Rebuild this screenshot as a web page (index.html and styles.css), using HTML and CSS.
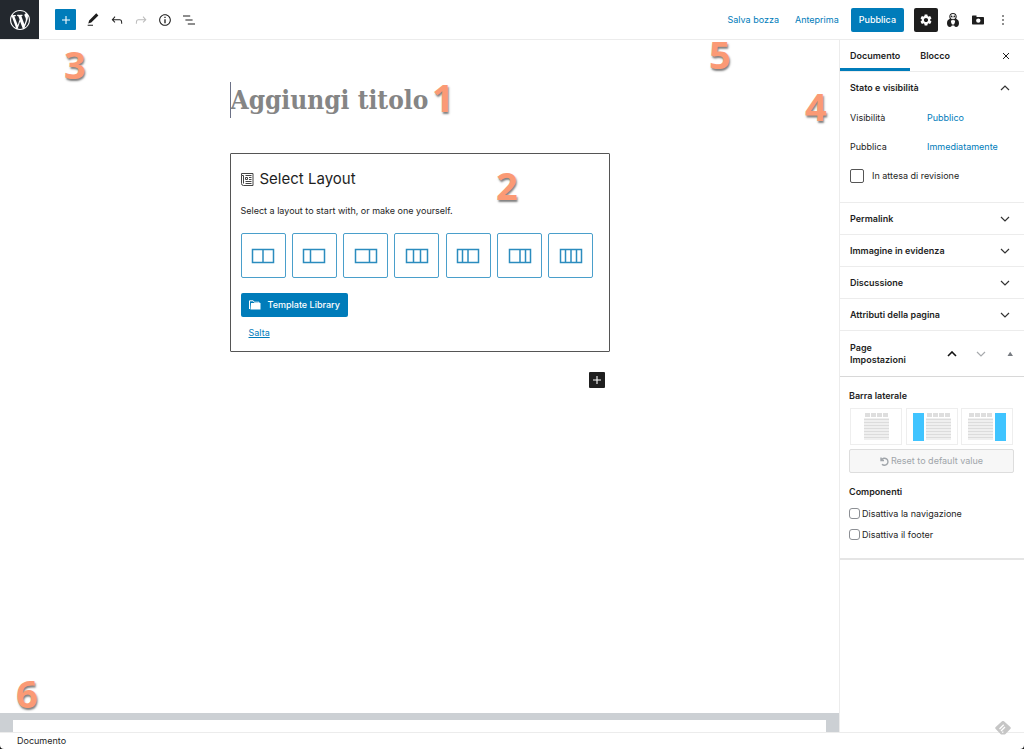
FILE: index.html
```html
<!DOCTYPE html>
<html lang="it">
<head>
    <meta charset="UTF-8">
    <meta name="viewport" content="width=device-width, initial-scale=1.0">
    <title>Aggiungi pagina</title>
    <link rel="stylesheet" href="styles.css">
</head>
<body>
    <div class="editor">
        <header class="editor-header">
            <a class="wp-logo" href="#" aria-label="WordPress">
                <svg width="20" height="20" viewBox="0 0 20 20" fill="currentColor"><path d="M20 10c0-5.51-4.49-10-10-10C4.48 0 0 4.49 0 10c0 5.52 4.48 10 10 10 5.51 0 10-4.48 10-10zM7.78 15.37L4.37 6.22c.55-.02 1.17-.08 1.17-.08.5-.06.44-1.13-.06-1.11 0 0-1.45.11-2.37.11-.18 0-.37 0-.58-.01C4.12 2.69 6.87 1.11 10 1.11c2.33 0 4.45.87 6.05 2.34-.68-.11-1.65.39-1.65 1.58 0 .74.45 1.36.9 2.1.35.61.55 1.36.55 2.46 0 1.49-1.4 5-1.4 5l-3.03-8.37c.54-.02.82-.17.82-.17.5-.05.44-1.25-.06-1.22 0 0-1.44.12-2.38.12-.87 0-2.33-.12-2.33-.12-.5-.03-.56 1.2-.06 1.22l.92.08 1.26 3.41zM17.41 10c.24-.64.74-1.87.43-4.25.7 1.29 1.05 2.71 1.05 4.25 0 3.29-1.73 6.24-4.4 7.78.97-2.59 1.94-5.2 2.92-7.78zM6.1 18.09C3.12 16.65 1.11 13.53 1.11 10c0-1.3.23-2.48.72-3.59C3.25 10.3 4.67 14.2 6.1 18.09zm4.03-6.63l2.58 6.98c-.86.29-1.76.45-2.71.45-.79 0-1.57-.11-2.29-.33.81-2.38 1.62-4.74 2.42-7.1z"/></svg>
            </a>
            <div class="toolbar">
                <button class="inserter-btn" aria-label="Aggiungi blocco">
                    <svg width="16" height="16" viewBox="0 0 24 24" fill="currentColor"><path d="M18 11.2h-5.2V6h-1.6v5.2H6v1.6h5.2V18h1.6v-5.2H18z"/></svg>
                </button>
                <button class="tool-btn" aria-label="Strumenti">
                    <svg width="16" height="16" viewBox="0 0 24 24" fill="currentColor"><path d="M20.1 5.1L16.9 2 6.2 12.7l-1.3 4.4 4.5-1.3L20.1 5.1zM4 20.8h8v-1.5H4v1.5z"/></svg>
                </button>
                <button class="tool-btn" aria-label="Annulla">
                    <svg width="16" height="16" viewBox="0 0 24 24" fill="currentColor"><path d="M18.3 11.7c-.6-.6-1.4-.9-2.3-.9H6.7l2.9-3.3-1.1-1-4.5 5L8.5 16l1-1-2.7-2.7H16c.5 0 .9.2 1.3.5 1 1 1 3.4 1 4.5v.3h1.5v-.2c0-1.5 0-4.3-1.5-5.7z"/></svg>
                </button>
                <button class="tool-btn" aria-label="Ripeti" disabled>
                    <svg width="16" height="16" viewBox="0 0 24 24" fill="currentColor"><path d="M15.6 6.5l-1.1 1 2.9 3.3H8c-.9 0-1.7.3-2.3.9-1.4 1.5-1.4 4.2-1.4 5.6v.2h1.5v-.3c0-1.1 0-3.5 1-4.5.3-.3.7-.5 1.3-.5h9.2L14.5 15l1.1 1.1 4.6-4.6-4.6-5z"/></svg>
                </button>
                <button class="tool-btn" aria-label="Informazioni">
                    <svg width="16" height="16" viewBox="0 0 24 24" fill="currentColor"><path d="M12 3.2c-4.8 0-8.8 3.9-8.8 8.8 0 4.8 3.9 8.8 8.8 8.8 4.8 0 8.8-3.9 8.8-8.8 0-4.8-4-8.8-8.8-8.8zm0 16c-4 0-7.2-3.3-7.2-7.2C4.8 8 8 4.8 12 4.8s7.2 3.3 7.2 7.2c0 4-3.2 7.2-7.2 7.2zM11 17h2v-6h-2v6zm0-8h2V7h-2v2z"/></svg>
                </button>
                <button class="tool-btn" aria-label="Struttura">
                    <svg width="16" height="16" viewBox="0 0 24 24" fill="currentColor"><path d="M13.8 5.2H3v1.5h10.8V5.2zm-3.6 12v1.5H21v-1.5H10.2zm7.2-6H6.6v1.5h10.8v-1.5z"/></svg>
                </button>
            </div>
            <div class="header-actions">
                <button class="link-btn">Salva bozza</button>
                <button class="link-btn">Anteprima</button>
                <button class="primary-btn publish-btn">Pubblica</button>
                <button class="settings-btn" aria-label="Impostazioni">
                    <svg width="14" height="14" viewBox="0 0 24 24" fill="currentColor"><path d="M19.14 12.94c.04-.3.06-.61.06-.94 0-.32-.02-.64-.07-.94l2.03-1.58c.18-.14.23-.41.12-.61l-1.92-3.32c-.12-.22-.37-.29-.59-.22l-2.39.96c-.5-.38-1.03-.7-1.62-.94l-.36-2.54c-.04-.24-.24-.41-.48-.41h-3.84c-.24 0-.43.17-.47.41l-.36 2.54c-.59.24-1.13.57-1.62.94l-2.39-.96c-.22-.08-.47 0-.59.22L2.74 8.87c-.12.21-.08.47.12.61l2.03 1.58c-.05.3-.09.63-.09.94s.02.64.07.94l-2.03 1.58c-.18.14-.23.41-.12.61l1.92 3.32c.12.22.37.29.59.22l2.39-.96c.5.38 1.03.7 1.62.94l.36 2.54c.05.24.24.41.48.41h3.84c.24 0 .44-.17.47-.41l.36-2.54c.59-.24 1.13-.56 1.62-.94l2.39.96c.22.08.47 0 .59-.22l1.92-3.32c.12-.22.07-.47-.12-.61l-2.01-1.58zM12 15.6c-1.98 0-3.6-1.62-3.6-3.6s1.62-3.6 3.6-3.6 3.6 1.62 3.6 3.6-1.62 3.6-3.6 3.6z"/></svg>
                </button>
                <button class="plugin-btn" aria-label="Panda">
                    <svg width="14" height="14" viewBox="0 0 14 14">
                        <path d="M7 0C4.600 0 3.300 1.600 3.300 3.600c0 1 .2 1.600.6 2.200C2.200 6.400 1 8 1 10.200 1 12.500 2.200 14 4 14c1 0 1.600-.6 1.800-1.400h2.400C8.400 13.400 9 14 10 14c1.800 0 3-1.500 3-3.800 0-2.200-1.200-3.800-2.900-4.400.4-.6.6-1.200.6-2.200C10.700 1.600 9.400 0 7 0z" fill="#1e1e1e"/>
                        <path d="M7 1C5.300 1 4.300 2 4.300 3.500S5.400 6.200 7 6.200s2.700-1.200 2.700-2.700S8.700 1 7 1zM4.800 7.800c.6-.5 1.300-.7 2.200-.7s1.600.2 2.200.7c-.2 1.500-.5 2.700-1.200 3.600H6c-.7-.9-1-2.100-1.200-3.600z" fill="#fff"/>
                        <circle cx="5.600" cy="3.400" r=".9" fill="#1e1e1e"/>
                        <circle cx="8.400" cy="3.400" r=".9" fill="#1e1e1e"/>
                        <path d="M6.300 4.800h1.400L7 5.500z" fill="#1e1e1e"/>
                    </svg>
                </button>
                <button class="plugin-btn" aria-label="Modelli">
                    <svg width="12" height="10" viewBox="0 0 12 10" fill="#1e1e1e" fill-rule="evenodd"><path d="M1 .5h3.500V2H11c.6 0 1 .4 1 1v5.500c0 .6-.4 1-1 1H1c-.6 0-1-.4-1-1v-7c0-.6.4-1 1-1zM6.300 3.400a2.200 2.200 0 1 0 0 4.400 2.200 2.200 0 0 0 0-4.400z"/></svg>
                </button>
                <button class="plugin-btn" aria-label="Altre opzioni">
                    <svg width="16" height="16" viewBox="0 0 24 24" fill="currentColor"><path d="M11 5h2v2h-2zM11 11h2v2h-2zM11 17h2v2h-2z"/></svg>
                </button>
            </div>
        </header>

        <div class="editor-body">
            <main class="content">
                <div class="writing-area">
                    <input class="post-title" type="text" placeholder="Aggiungi titolo" aria-label="Aggiungi titolo">

                    <section class="layout-card">
                        <h2 class="card-title">
                            <svg width="13" height="13" viewBox="0 0 13 13" fill="none" stroke="#444"><path d="M.5 2.500V.5h11.500v12H2.500a2 2 0 0 1-2-2v-8h2v8M4.500 2.500h6M4.500 10.500h6M4.500 8.500h6M8 4.500h2.500M8 6.500h2.500M4.500 4.500h2v2h-2z"/></svg>
                            Select Layout
                        </h2>
                        <p class="card-text">Select a layout to start with, or make one yourself.</p>
                        <div class="layout-options">
                            <button class="layout-option" aria-label="50 / 50"><svg width="24" height="16" viewBox="0 0 24 16"><path d="M1.500 1.500h21v13h-21zM12 1.500v13"/></svg></button>
                            <button class="layout-option" aria-label="33 / 66"><svg width="24" height="16" viewBox="0 0 24 16"><path d="M1.500 1.500h21v13h-21zM8.500 1.500v13"/></svg></button>
                            <button class="layout-option" aria-label="66 / 33"><svg width="24" height="16" viewBox="0 0 24 16"><path d="M1.500 1.500h21v13h-21zM15.500 1.500v13"/></svg></button>
                            <button class="layout-option" aria-label="33 / 33 / 33"><svg width="24" height="16" viewBox="0 0 24 16"><path d="M1.500 1.500h21v13h-21zM8.500 1.500v13M15.500 1.500v13"/></svg></button>
                            <button class="layout-option" aria-label="25 / 25 / 50"><svg width="24" height="16" viewBox="0 0 24 16"><path d="M1.500 1.500h21v13h-21zM6.500 1.500v13M12 1.500v13"/></svg></button>
                            <button class="layout-option" aria-label="50 / 25 / 25"><svg width="24" height="16" viewBox="0 0 24 16"><path d="M1.500 1.500h21v13h-21zM12 1.500v13M17.500 1.500v13"/></svg></button>
                            <button class="layout-option" aria-label="25 / 25 / 25 / 25"><svg width="24" height="16" viewBox="0 0 24 16"><path d="M1.500 1.500h21v13h-21zM6.500 1.500v13M12 1.500v13M17.500 1.500v13"/></svg></button>
                        </div>
                        <button class="primary-btn library-btn">
                            <svg width="12" height="10" viewBox="0 0 12 10"><path d="M.5 9V.8h3.700l1 1.400H10V3" fill="none" stroke="#fff"/><path d="M2 3h9.500v6.500H1.500z" fill="#fff"/></svg>
                            Template Library
                        </button>
                        <a class="skip-link" href="#">Salta</a>
                    </section>

                    <button class="appender-btn" aria-label="Aggiungi blocco">
                        <svg width="16" height="16" viewBox="0 0 24 24" fill="currentColor"><path d="M18 11.2h-5.2V6h-1.6v5.2H6v1.6h5.2V18h1.6v-5.2H18z"/></svg>
                    </button>
                </div>
                <div class="metaboxes"><div class="metabox"></div></div>
            </main>

            <aside class="sidebar">
                <div class="tabs">
                    <button class="tab active">Documento</button>
                    <button class="tab">Blocco</button>
                    <button class="close-btn" aria-label="Chiudi impostazioni">
                        <svg width="8" height="8" viewBox="0 0 8 8" stroke="currentColor"><path d="M1 1l6 6M7 1L1 7"/></svg>
                    </button>
                </div>

                <section class="panel panel-open">
                    <button class="panel-toggle">Stato e visibilità
                        <svg class="chevron" width="10" height="6" viewBox="0 0 10 6"><path d="M1 5l4-4 4 4"/></svg>
                    </button>
                    <div class="panel-row"><span>Visibilità</span><a href="#">Pubblico</a></div>
                    <div class="panel-row"><span>Pubblica</span><a href="#">Immediatamente</a></div>
                    <label class="check-row"><input class="check-large" type="checkbox">In attesa di revisione</label>
                </section>
                <section class="panel">
                    <button class="panel-toggle">Permalink
                        <svg class="chevron" width="10" height="6" viewBox="0 0 10 6"><path d="M1 1l4 4 4-4"/></svg>
                    </button>
                </section>
                <section class="panel">
                    <button class="panel-toggle">Immagine in evidenza
                        <svg class="chevron" width="10" height="6" viewBox="0 0 10 6"><path d="M1 1l4 4 4-4"/></svg>
                    </button>
                </section>
                <section class="panel">
                    <button class="panel-toggle">Discussione
                        <svg class="chevron" width="10" height="6" viewBox="0 0 10 6"><path d="M1 1l4 4 4-4"/></svg>
                    </button>
                </section>
                <section class="panel">
                    <button class="panel-toggle">Attributi della pagina
                        <svg class="chevron" width="10" height="6" viewBox="0 0 10 6"><path d="M1 1l4 4 4-4"/></svg>
                    </button>
                </section>

                <section class="page-settings">
                    <div class="settings-header">
                        <h2 class="settings-title">Page Impostazioni</h2>
                        <div class="order-actions">
                            <button aria-label="Sposta su"><svg class="chevron up" width="10" height="6" viewBox="0 0 10 6"><path d="M1 5l4-4 4 4"/></svg></button>
                            <button aria-label="Sposta giù"><svg class="chevron down" width="10" height="6" viewBox="0 0 10 6"><path d="M1 1l4 4 4-4"/></svg></button>
                            <button aria-label="Chiudi pannello"><svg width="10" height="6" viewBox="0 0 10 6" fill="#787c82"><path d="M2.500 5h5.500L5.200.8z"/></svg></button>
                        </div>
                    </div>
                    <div class="settings-body">
                        <h3 class="field-title">Barra laterale</h3>
                        <div class="sidebar-options">
                            <button class="sidebar-option" aria-label="Nessuna barra"><span class="page-lines"></span></button>
                            <button class="sidebar-option" aria-label="Barra a sinistra"><span class="page-bar"></span><span class="page-lines"></span></button>
                            <button class="sidebar-option" aria-label="Barra a destra"><span class="page-lines"></span><span class="page-bar"></span></button>
                        </div>
                        <button class="reset-btn" disabled>
                            <svg width="9" height="9" viewBox="0 0 9 9" fill="none" stroke="currentColor" stroke-width="1.400"><path d="M1.500 2.800A3.500 3.500 0 1 1 2 7.200M1 .5v3h3"/></svg>
                            Reset to default value
                        </button>
                        <h3 class="field-title">Componenti</h3>
                        <label class="check-row-small"><input class="check-small" type="checkbox">Disattiva la navigazione</label>
                        <label class="check-row-small"><input class="check-small" type="checkbox">Disattiva il footer</label>
                    </div>
                </section>
            </aside>
        </div>

        <footer class="editor-footer">Documento</footer>

        <svg class="feedly" width="16" height="14" viewBox="0 0 16 14"><path d="M6.700.6a1.800 1.800 0 0 1 2.600 0l6 5.500a1.400 1.400 0 0 1 0 2L10.500 13a2 2 0 0 1-1.400.6H6.900a2 2 0 0 1-1.400-.6L.7 8.100a1.400 1.400 0 0 1 0-2z" fill="#c6c6c6"/><path d="M4.500 8L8.700 3.800M6 10l4-4M7.300 11.600l1-1" stroke="#fff" stroke-width="1.300"/></svg>

        <span class="marker marker-title">1</span>
        <span class="marker marker-layout">2</span>
        <span class="marker marker-toolbar">3</span>
        <span class="marker marker-sidebar">4</span>
        <span class="marker marker-actions">5</span>
        <span class="marker marker-footer">6</span>
    </div>
</body>
</html>
```
FILE: styles.css
```css
:root {
    --primary-color: #007cba;
    --text-color: #1e1e1e;
    --border-color: #ececec;
    --marker-color: #fb9a75;
}

* {
    margin: 0;
    padding: 0;
    box-sizing: border-box;
}

html {
    background-color: #111;
}

body {
    font-family: Inter, "Liberation Sans", sans-serif;
    font-size: 9px;
    line-height: 12px;
    color: var(--text-color);
}

button,
input {
    font: inherit;
    color: inherit;
    background: none;
    border: none;
}

button {
    display: flex;
    align-items: center;
    justify-content: center;
    flex-shrink: 0;
}

a {
    color: var(--primary-color);
    text-decoration: none;
}

svg {
    display: block;
    flex-shrink: 0;
}

.editor {
    position: relative;
    display: flex;
    flex-direction: column;
    min-height: 100vh;
    background-color: #fff;
    border-radius: 0 0 4px 4px;
    overflow: hidden;
}

/* Header */
.editor-header {
    display: flex;
    align-items: center;
    height: 40px;
    border-bottom: 1px solid var(--border-color);
}

.wp-logo {
    display: flex;
    align-items: center;
    justify-content: center;
    width: 39px;
    height: 39px;
    background-color: #23282e;
    color: #fff;
}

.toolbar {
    display: flex;
    align-items: center;
    padding-left: 16px;
}

.inserter-btn {
    width: 21px;
    height: 21px;
    margin-right: 5px;
    border-radius: 1px;
    background-color: var(--primary-color);
    color: #fff;
}

.tool-btn {
    width: 24px;
    height: 24px;
}

.tool-btn:disabled {
    color: #bbb;
}

.header-actions {
    display: flex;
    align-items: center;
    margin-left: auto;
    padding-right: 9px;
}

.link-btn {
    padding: 0 8px;
    color: var(--primary-color);
}

.primary-btn {
    background-color: var(--primary-color);
    color: #fff;
    border-radius: 2px;
    height: 24px;
    padding: 0 8px;
}

.publish-btn {
    margin: 0 10px 0 4px;
    font-weight: 500;
}

.settings-btn {
    width: 24px;
    height: 24px;
    margin-right: 2px;
    border-radius: 2px;
    background-color: var(--text-color);
    color: #fff;
}

.plugin-btn {
    width: 25px;
    height: 24px;
}

/* Content */
.editor-body {
    display: flex;
    flex: 1;
}

.content {
    display: flex;
    flex-direction: column;
    flex: 1;
}

.writing-area {
    display: flex;
    flex-direction: column;
    width: 100%;
    max-width: 380px;
    margin: 0 auto;
    padding-top: 42px;
}

.post-title {
    width: 100%;
    height: 36px;
    margin-bottom: 35px;
    border-left: 1px solid #6b7186;
    font-family: "Roboto Slab", "DejaVu Serif Condensed", "DejaVu Serif", serif;
    font-size: 26px;
    font-weight: 700;
}

.post-title::placeholder {
    color: #858585;
    opacity: 1;
}

.layout-card {
    display: flex;
    flex-direction: column;
    align-items: flex-start;
    padding: 15px 15px 12px 10px;
    border: 1px solid #555;
    border-radius: 1px;
}

.card-title {
    display: flex;
    align-items: center;
    gap: 6px;
    margin-bottom: 16px;
    font-size: 15px;
    font-weight: 400;
    line-height: 20px;
}

.card-text {
    margin-bottom: 16px;
}

.layout-options {
    display: flex;
    justify-content: space-between;
    width: 100%;
    margin-bottom: 15px;
}

.layout-option {
    width: 45px;
    height: 45px;
    border: 1px solid #4a9fcb;
    border-radius: 2px;
}

.layout-option path {
    fill: none;
    stroke: #2b8cbe;
    stroke-width: 1.5;
}

.library-btn {
    gap: 7px;
    font-weight: 500;
}

.skip-link {
    margin: 10px 0 0 8px;
    text-decoration: underline;
}

.appender-btn {
    align-self: flex-end;
    width: 16px;
    height: 16px;
    margin: 20px 5px 0 0;
    border-radius: 1px;
    background-color: var(--text-color);
    color: #fff;
}

.metaboxes {
    margin-top: auto;
    padding: 7px 13px 0;
    background-color: #ccd0d4;
}

.metabox {
    height: 12px;
    background-color: #fff;
}

/* Sidebar */
.sidebar {
    width: 185px;
    border-left: 1px solid var(--border-color);
}

.tabs {
    display: flex;
    height: 32px;
    border-bottom: 1px solid var(--border-color);
}

.tab {
    padding: 0 10px;
    font-weight: 600;
}

.tab.active {
    box-shadow: inset 0 -3px var(--primary-color);
}

.close-btn {
    width: 24px;
    margin: 0 6px 0 auto;
}

.panel {
    padding: 0 10px;
    border-bottom: 1px solid var(--border-color);
}

.panel-open {
    padding-bottom: 15px;
}

.panel-toggle {
    justify-content: space-between;
    width: 100%;
    height: 31px;
    padding-right: 4px;
    font-weight: 600;
}

.chevron {
    fill: none;
    stroke: #333;
    stroke-width: 1.2;
}

.chevron.up {
    stroke: #111;
    stroke-width: 1.6;
}

.chevron.down {
    stroke: #a7aaad;
}

.panel-row {
    display: grid;
    grid-template-columns: 77px 1fr;
    align-items: center;
    height: 29px;
}

.check-row {
    display: flex;
    align-items: center;
    gap: 8px;
    height: 22px;
    margin-top: 4px;
}

.check-large,
.check-small {
    appearance: none;
    width: 14px;
    height: 14px;
    border: 1px solid #555;
    border-radius: 2px;
}

.check-small {
    width: 11px;
    height: 11px;
    border-color: #8c8f94;
    border-radius: 3px;
}

.check-row-small {
    display: flex;
    align-items: center;
    gap: 2px;
    height: 21px;
}

.page-settings {
    border-bottom: 2px solid #e5e5e5;
}

.settings-header {
    display: flex;
    align-items: center;
    justify-content: space-between;
    height: 46px;
    padding-left: 10px;
    border-bottom: 1px solid #d8d8d8;
}

.settings-title {
    width: 70px;
    font-size: 9px;
    font-weight: 600;
}

.order-actions {
    display: flex;
}

.order-actions button {
    width: 29px;
    height: 24px;
}

.settings-body {
    padding: 13px 10px 13px 9px;
}

.field-title {
    font-size: 9px;
    font-weight: 600;
}

.sidebar-options {
    display: flex;
    justify-content: space-between;
    margin: 6px 1px 4px;
}

.sidebar-option {
    gap: 2px;
    width: 52px;
    height: 37px;
    border: 1px solid #eee;
}

.page-bar {
    width: 11px;
    height: 28px;
    background-color: #40c4ff;
}

.page-lines {
    width: 25px;
    height: 27px;
    background:
        repeating-linear-gradient(90deg, #fff 0 1px, transparent 1px 6px) 0 0 / 100% 5px no-repeat,
        linear-gradient(#dedede 0 4px, #fff 4px 5px, transparent 5px),
        repeating-linear-gradient(#dcdcdc 0 1px, #efefef 1px 3px);
}

.reset-btn {
    gap: 2px;
    width: 100%;
    height: 24px;
    margin-bottom: 13px;
    border: 1px solid #ddd;
    border-radius: 2px;
    background-color: #f7f7f7;
    color: #a0a5aa;
}

.field-title + .check-row-small {
    margin-top: 5px;
}

/* Footer */
.editor-footer {
    padding: 2px 17px;
    border-top: 1px solid var(--border-color);
}

.feedly {
    position: absolute;
    right: 13px;
    bottom: 14px;
}

/* Numbered markers laid over the editor */
.marker {
    position: absolute;
    font-family: "Liberation Sans Narrow", "Noto Sans", sans-serif;
    font-size: 38px;
    font-weight: 700;
    line-height: 38px;
    color: var(--marker-color);
    text-shadow: 1px 2px 2px rgba(0, 0, 0, 0.5);
}

.marker-title {
    left: 432px;
    top: 78px;
}

.marker-layout {
    left: 496px;
    top: 166px;
}

.marker-toolbar {
    left: 64px;
    top: 45px;
}

.marker-sidebar {
    left: 805px;
    top: 87px;
}

.marker-actions {
    left: 709px;
    top: 35px;
}

.marker-footer {
    left: 16px;
    top: 674px;
}
```
